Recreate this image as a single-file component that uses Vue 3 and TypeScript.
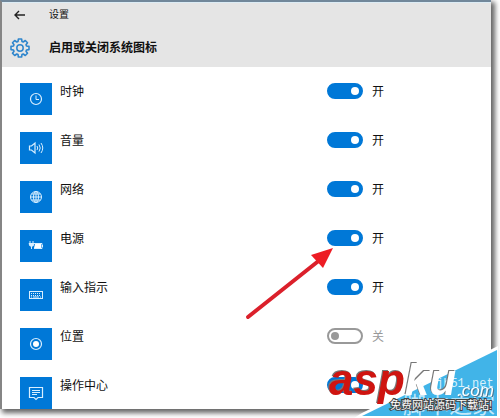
<script setup lang="ts">
import { ref } from 'vue'

type IconName = 'clock' | 'volume' | 'network' | 'power' | 'keyboard' | 'location' | 'action'

interface SystemIcon {
  id: IconName
  label: string
  enabled: boolean
}

const items = ref<SystemIcon[]>([
  { id: 'clock', label: '时钟', enabled: true },
  { id: 'volume', label: '音量', enabled: true },
  { id: 'network', label: '网络', enabled: true },
  { id: 'power', label: '电源', enabled: true },
  { id: 'keyboard', label: '输入指示', enabled: true },
  { id: 'location', label: '位置', enabled: false },
  { id: 'action', label: '操作中心', enabled: true },
])
</script>

<template>
  <div class="page">
    <main class="window">
      <header class="header">
        <div class="titlebar">
          <button class="back" type="button" aria-label="返回">
            <svg width="12" height="10" viewBox="0 0 12 10">
              <path d="M11 5H1M5 1L1 5l4 4" fill="none" stroke="#222" stroke-width="1.4" />
            </svg>
          </button>
          <span class="app-name">设置</span>
        </div>
        <div class="heading">
          <svg class="gear" width="20" height="20" viewBox="0 0 20 20">
            <path
              d="M8.4 1h3.2l.4 2.5 1.2.5 2.1-1.5 2.2 2.2L16 6.8l.5 1.2 2.5.4v3.2l-2.5.4-.5 1.2 1.5 2.1-2.2 2.2-2.1-1.5-1.2.5-.4 2.5H8.4L8 16.5l-1.2-.5-2.1 1.5-2.2-2.2L4 13.2 3.5 12 1 11.6V8.4L3.5 8 4 6.8 2.5 4.7l2.2-2.2L6.8 4 8 3.500z"
              fill="none" stroke="#2f86cd" stroke-width="1.6" stroke-linejoin="round"
            />
            <circle cx="10" cy="10" r="3.2" fill="none" stroke="#2f86cd" stroke-width="1.5" />
          </svg>
          <h1>启用或关闭系统图标</h1>
        </div>
      </header>

      <ul class="list">
        <li v-for="item in items" :key="item.id" class="row">
          <span class="tile">
            <svg width="16" height="16" viewBox="0 0 16 16" fill="none" stroke="#d9efff">
              <template v-if="item.id === 'clock'">
                <circle cx="8" cy="8" r="5.5" stroke-width="1.2" />
                <path d="M8 4.5V8.500h3" />
              </template>
              <template v-else-if="item.id === 'volume'">
                <path d="M1.5 6h2L7 3v10L3.5 10h-2z" stroke-width="1.2" />
                <path d="M9 6q1.500 2 0 4M11 4.500q2.500 3.500 0 7M13 3q3.500 5 0 10" />
              </template>
              <template v-else-if="item.id === 'network'">
                <circle cx="8" cy="8" r="5.5" />
                <ellipse cx="8" cy="8" rx="2.5" ry="5.5" />
                <path d="M2.500 8h11M3.500 5h9M3.500 11h9M8 2.500v11" />
              </template>
              <template v-else-if="item.id === 'power'">
                <path d="M5 5.500h9v5H6M14.500 7v2" />
                <path d="M7 6h6v4H6z" fill="#fff" stroke="none" />
                <path d="M2 3v3M5 3v3M1 5.500h5L5 8H2zM3.500 8v3" fill="#d9efff" />
              </template>
              <template v-else-if="item.id === 'keyboard'">
                <rect x="1.5" y="4.5" width="13" height="7" />
                <path d="M3 6.500h10M3 8.500h10" stroke-dasharray="1 1" />
                <path d="M3 10h1m1 0h6m1 0h1" />
              </template>
              <template v-else-if="item.id === 'location'">
                <circle cx="8" cy="8" r="5.5" stroke-width="1.2" />
                <circle cx="8" cy="8" r="3" fill="#fff" stroke="none" />
              </template>
              <template v-else>
                <path d="M1.500 2.500h13v10H10L8 14.500l-2-2H1.500z" stroke-width="1.2" />
                <path d="M4 5.500h8M4 7.500h8M4 9.500h5" />
              </template>
            </svg>
          </span>
          <label class="name" :for="item.id">{{ item.label }}</label>
          <input :id="item.id" v-model="item.enabled" class="toggle" type="checkbox" role="switch" />
          <span v-if="item.id !== 'action'" class="state" :class="{ off: !item.enabled }">
            {{ item.enabled ? '开' : '关' }}
          </span>
        </li>
      </ul>
    </main>

    <svg class="arrow" width="90" height="74" viewBox="0 0 90 74">
      <path d="M3 70L76 12" stroke="#db202b" stroke-width="4" stroke-linecap="round" />
      <path d="M88 1L66 8l12 13z" fill="#ed1c24" />
    </svg>

    <svg class="watermark" width="200" height="78" viewBox="0 0 200 78">
      <path d="M198 6V78H54L62 73z" fill="#fff" />
      <path d="M197 10V76H62z" fill="#41b4e8" />
      <text class="site" x="136" y="47">jb51.net</text>
      <text class="site-name" x="103" y="73">脚本之家</text>
      <text class="brand" x="29" y="55"><tspan class="red">asp</tspan><tspan>ku</tspan></text>
      <text class="domain" x="157" y="56">.com</text>
      <text class="slogan" x="90" y="69">免费网站源码下载站!</text>
    </svg>
  </div>
</template>

<style>
body {
  margin: 0;
  background: #fff;
}
</style>

<style scoped>
.page {
  position: relative;
  box-sizing: border-box;
  min-height: 100vh;
  padding: 0 9px 9px 0;
  overflow: hidden;
  font-family: "Liberation Sans", "Noto Sans CJK SC", sans-serif;
  font-size: 12px;
  line-height: 18px;
  color: #111;
}

.window {
  overflow: hidden;
  border-top: 2px solid #71879a;
  border-left: 2px solid #858585;
  background: #fff;
  box-shadow: 3px 3px 5px 1px #666;
}

.header {
  box-sizing: border-box;
  height: 65px;
  padding-top: 4px;
  border-top: 1px solid #dcecf5;
  background: #e5e5e5;
}

.titlebar {
  display: flex;
  align-items: center;
  height: 16px;
}

.back {
  display: flex;
  width: 36px;
  margin-right: 11px;
  padding: 0 0 0 12px;
  border: 0;
  background: none;
}

.app-name {
  font-size: 10px;
}

.heading {
  display: flex;
  align-items: center;
  gap: 19px;
  height: 22px;
  margin-top: 14px;
  padding-left: 8px;
}

h1 {
  margin: 0;
  font-size: 12px;
  font-weight: 700;
  line-height: 22px;
}

.list {
  display: grid;
  gap: 17px;
  margin: 0;
  padding: 16px 18px 0;
  list-style: none;
}

.row {
  display: flex;
  align-items: flex-start;
}

.tile {
  display: grid;
  flex: none;
  place-items: center;
  width: 32px;
  height: 32px;
  background: #0078d7;
}

.name {
  flex: 0 1 267px;
  box-sizing: border-box;
  padding-left: 8px;
}

.toggle {
  position: relative;
  flex: none;
  box-sizing: border-box;
  width: 36px;
  height: 16px;
  margin: 0 9px 0 8px;
  border: 2px solid #999;
  border-radius: 8px;
  background: #fff;
  appearance: none;
}

.toggle::before {
  position: absolute;
  top: 2px;
  left: 2px;
  width: 8px;
  height: 8px;
  border-radius: 50%;
  background: #999;
  content: "";
}

.toggle:checked {
  border-color: #0078d7;
  background: #0078d7;
}

.toggle:checked::before {
  right: 2px;
  left: auto;
  background: #fff;
}

.state.off {
  color: #999;
}

.arrow {
  position: absolute;
  top: 247px;
  left: 245px;
}

.watermark {
  position: absolute;
  right: 0;
  bottom: 0;
}

.brand {
  font-size: 44px;
  font-style: italic;
  font-weight: 700;
  fill: #fff;
  filter: drop-shadow(-1px -1px 0 #777);
}

.red {
  fill: #cf1410;
}

.domain {
  font-size: 17px;
  font-style: italic;
  fill: #fff;
  filter: drop-shadow(1px 1px 0 #4b7890);
}

.site {
  font-family: "Liberation Mono", monospace;
  font-size: 12px;
  fill: #d8f1fb;
}

.site-name {
  font-size: 23px;
  fill: #c5e9f8;
}

.slogan {
  font-size: 11px;
  fill: #fff;
  stroke: #444;
  stroke-width: 2px;
  paint-order: stroke;
}
</style>
